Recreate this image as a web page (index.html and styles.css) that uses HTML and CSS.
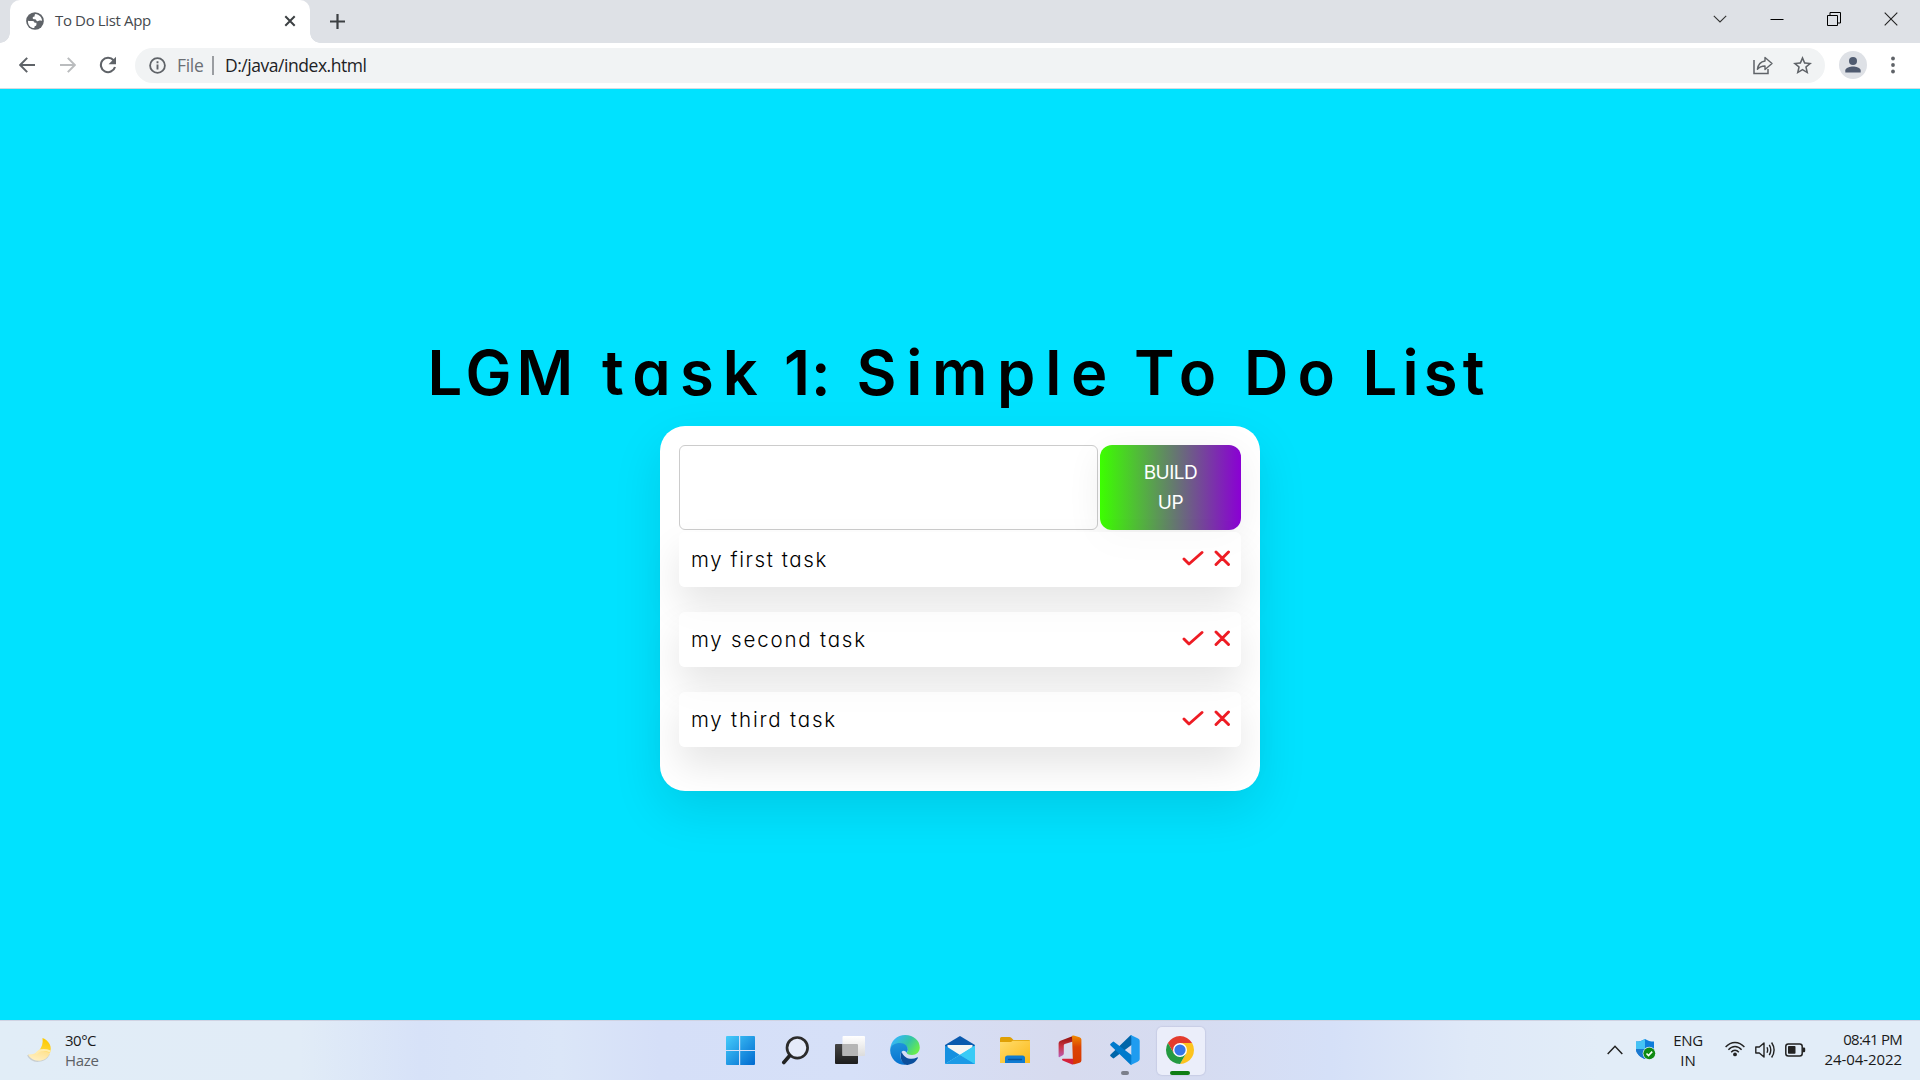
FILE: index.html
```
<!DOCTYPE html>
<html lang="en">
<head>
<meta charset="utf-8">
<title>To Do List App</title>
<link rel="stylesheet" href="styles.css">
</head>
<body>
<header class="tabstrip">
  <div class="tab">
    <svg class="favicon" width="18" height="18" viewBox="0 0 24 24"><circle cx="12" cy="12" r="11.8" fill="#5f6368"/><path d="M2.6 11.5c2.6.3 4 .4 6 .5 2 .1 2.6 1 2.7 2.4h2.6v2.3c0 1.400-1 2-2.300 2.200l-.6 2.500C6 21.400 2.300 17 2.600 11.500zM12.500 2.500c-1 1-1.500 2-.6 3.100-1.700.5-3.600 1-2.900 2.900.5 1.300 2.500.6 3.500 1.200 1.200.7.9 2.300 2.600 2.500 1.600.2 2.400-1.100 4.300-.9l2.100.5c0-4.800-4-8.900-9-9.300z" fill="#fff"/></svg>
    <span class="tab-title">To Do List App</span>
    <svg class="tab-close" width="12" height="12" viewBox="0 0 12 12"><path d="M1.300 1.300l9.400 9.400M10.700 1.300l-9.400 9.400" stroke="#3c4043" stroke-width="2"/></svg>
  </div>
  <svg class="new-tab" width="15" height="15" viewBox="0 0 15 15"><path d="M7.500 0v15M0 7.500h15" stroke="#3c4043" stroke-width="2.200"/></svg>
  <div class="window-controls">
    <svg width="14" height="14" viewBox="0 0 14 14"><path d="M.8 3.800L7 10l6.200-6.200" fill="none" stroke="#333" stroke-width="1.100"/></svg>
    <svg width="14" height="14" viewBox="0 0 14 14"><path d="M.5 7.500h13" stroke="#000"/></svg>
    <svg width="14" height="14" viewBox="0 0 14 14"><path d="M.5 3.500h10v10H.5zM3 3V.5h10.500V11H11" fill="none" stroke="#000"/></svg>
    <svg width="14" height="14" viewBox="0 0 14 14"><path d="M.7.700l12.600 12.600M13.300.7L.7 13.300" stroke="#222" stroke-width="1.100"/></svg>
  </div>
</header>
<nav class="toolbar">
  <svg class="back" width="16" height="16" viewBox="0 0 16 16"><path d="M16 8H1.500M8.200.9L1.100 8l7.100 7.100" fill="none" stroke="#5f6368" stroke-width="2"/></svg>
  <svg class="forward" width="16" height="16" viewBox="0 0 16 16"><path d="M0 8h14.500M7.800.9L14.900 8l-7.100 7.100" fill="none" stroke="#babcbe" stroke-width="2"/></svg>
  <svg class="reload" width="18" height="18" viewBox="0 0 18 18"><path d="M14.600 4.300A7.200 7.200 0 1 0 16 11" fill="none" stroke="#5f6368" stroke-width="2.100"/><path d="M17 .8v7.400H9.600z" fill="#5f6368"/></svg>
  <div class="omnibox">
    <svg width="17" height="17" viewBox="0 0 17 17"><circle cx="8.500" cy="8.500" r="7.400" fill="none" stroke="#5f6368" stroke-width="1.800"/><path d="M8.500 7.600v5M8.500 4.300v1.900" stroke="#5f6368" stroke-width="1.900"/></svg>
    <span class="scheme">File</span>
    <span class="divider"></span>
    <span class="url">D:/java/index.html</span>
    <svg class="share" width="20" height="19" viewBox="0 0 20 19"><path d="M1 4v13.500h14V13" fill="none" stroke="#5f6368" stroke-width="1.500"/><path d="M12 1.500l7 6-7 6V10c-3.400 0-5.700.9-7.600 3.300C5 9 7.400 5.700 12 5z" fill="none" stroke="#5f6368" stroke-width="1.400" stroke-linejoin="round"/></svg>
    <svg class="star" width="19" height="19" viewBox="2 2 20 20"><path fill="#5f6368" d="M22 9.240l-7.190-.62L12 2 9.190 8.630 2 9.240l5.460 4.730L5.820 21 12 17.270 18.180 21l-1.630-7.030L22 9.240zM12 15.400l-3.760 2.270 1-4.280-3.320-2.880 4.380-.38L12 6.100l1.710 4.040 4.380.38-3.320 2.880 1 4.280L12 15.400z"/></svg>
  </div>
  <svg class="avatar" width="28" height="28" viewBox="0 0 28 28"><circle cx="14" cy="14" r="14" fill="#dee1e6"/><circle cx="14" cy="10" r="4" fill="#4f5b70"/><path d="M6.300 21.500v-2c0-2.700 5-4 7.700-4s7.700 1.300 7.700 4v2z" fill="#4f5b70"/></svg>
  <svg class="menu" width="4" height="18" viewBox="0 0 4 18"><g fill="#5f6368"><circle cx="2" cy="2.500" r="1.900"/><circle cx="2" cy="9" r="1.900"/><circle cx="2" cy="15.500" r="1.900"/></g></svg>
</nav>
<main class="page">
  <h1 class="heading">
    <span class="w-lgm">LGM</span> <span class="w-task">task</span> <span class="w-num">1:</span> <span class="w-simple">Simple</span> <span class="w-to">To</span> <span class="w-do">Do</span> <span class="w-list">List</span>
  </h1>
  <section class="card">
    <form class="entry">
      <input class="entry-input" type="text">
      <button class="entry-button" type="button">BUILD<br>UP</button>
    </form>
    <ul class="tasks">
      <li class="task"><span class="task-name first">my first task</span><svg class="actions" width="48" height="17" viewBox="0 0 48 17"><path d="M2 9l5 5L20 2.500M34 2l12.500 12.500M46.500 2L34 14.500"/></svg></li>
      <li class="task"><span class="task-name">my second task</span><svg class="actions" width="48" height="17" viewBox="0 0 48 17"><path d="M2 9l5 5L20 2.500M34 2l12.500 12.500M46.500 2L34 14.500"/></svg></li>
      <li class="task"><span class="task-name">my third task</span><svg class="actions" width="48" height="17" viewBox="0 0 48 17"><path d="M2 9l5 5L20 2.500M34 2l12.500 12.500M46.500 2L34 14.500"/></svg></li>
    </ul>
  </section>
</main>
<footer class="taskbar">
  <div class="weather">
    <svg width="26" height="26" viewBox="0 0 26 26"><defs><linearGradient id="moon" x1=".7" y1="0" x2=".4" y2="1"><stop offset="0" stop-color="#fcc800"/><stop offset=".45" stop-color="#ffd52e"/><stop offset=".55" stop-color="#ffe394"/><stop offset="1" stop-color="#ffefc0"/></linearGradient></defs><path d="M1 18c4 8 16 8 21-1" fill="none" stroke="#a9a79f" stroke-opacity=".45" stroke-width="2"/><path d="M15.500 1C22 3.500 25.500 9.500 23 16c-3 7.500-11 9.500-17 6.500-2.600-1.400-4.300-3.300-5-5 8 .8 16-5.500 14.500-16.500z" fill="url(#moon)"/><path d="M9 17c3-4.500 9-4.500 14.500-2.500" fill="none" stroke="#ffecae" stroke-width="2"/></svg>
    <div class="weather-text"><div class="temp">30°C</div><div class="sky">Haze</div></div>
  </div>
  <div class="apps">
    <div class="app"><svg width="30" height="30" viewBox="0 0 30 30"><defs><linearGradient id="win" x1="0" y1="0" x2="1" y2="1" ><stop offset="0" stop-color="#45ccfb"/><stop offset="1" stop-color="#0069cf"/></linearGradient></defs><path d="M1 2q0-1 1-1h12v14H1zM15.200 1H29q1 0 1 1v13H15.200zM1 16h13v14H2q-1 0-1-1zM15.200 16H30v13q0 1-1 1H15.200z" fill="url(#win)"/></svg></div>
    <div class="app"><svg width="30" height="30" viewBox="0 0 30 30"><circle cx="17.300" cy="12.800" r="10.300" fill="#e5ebfa" stroke="#2b2b2b" stroke-width="2.700"/><path d="M9.800 20.500l-6 7" stroke="#222" stroke-width="3.600" stroke-linecap="round"/></svg></div>
    <div class="app"><svg width="30" height="30" viewBox="0 0 30 30"><defs><linearGradient id="dk" x1="0" y1="0" x2="0" y2="1"><stop offset="0" stop-color="#454545"/><stop offset="1" stop-color="#1d1d1d"/></linearGradient><linearGradient id="lt" x1="0" y1="0" x2="0" y2="1"><stop offset="0" stop-color="#fff"/><stop offset="1" stop-color="#dcdcdc"/></linearGradient></defs><rect x="0" y="9" width="23" height="20" rx="1" fill="url(#dk)"/><rect x="7.500" y="1" width="22.500" height="20" rx="1" fill="url(#lt)"/><path d="M7.500 9H22q1 0 1 1v11H7.500z" fill="#b5b5b5"/></svg></div>
    <div class="app"><svg width="30" height="30" viewBox="0 0 256 256"><defs><linearGradient id="e1" x1=".2" y1=".2" x2="1" y2=".6"><stop offset="0" stop-color="#35b8ef"/><stop offset=".5" stop-color="#34c6a4"/><stop offset="1" stop-color="#68ec4d"/></linearGradient><linearGradient id="e2" x1=".4" y1="0" x2=".5" y2="1"><stop offset="0" stop-color="#1f94dc"/><stop offset="1" stop-color="#0572d0"/></linearGradient></defs><path d="M2 122C6 50 60 0 130 0c72 0 124 48 124 106 0 38-28 64-66 64-30 0-46-10-46-18 0-7 10-9 10-27 0-24-22-42-56-42C50 83 12 98 2 122z" fill="url(#e1)"/><path d="M2 122c6-34 40-54 82-54 44 0 68 28 68 56 0 14-8 19-10 28-10-22-32-24-44-8-22 34-4 84 36 109C64 260-4 198 2 122z" fill="url(#e2)"/><path d="M100 142c-26 46 6 114 50 113 42-4 72-26 88-58 2-5-3-8-8-5-48 26-114 6-130-50z" fill="#0b4f9c"/></svg></div>
    <div class="app"><svg width="30" height="30" viewBox="0 0 30 30"><path d="M0 10L15 1l15 9v5H0z" fill="#0a5aae"/><path d="M2.500 10h25v8L15 25 2.500 18z" fill="#f6f6f4"/><path d="M0 10.500L15 20 0 29z" fill="#1590e0"/><path d="M30 10.500L0 29h30z" fill="#35c2f3"/><path d="M15 20l15 9H0z" fill="#1c9ae6"/><path d="M30 10.500V29L15 20z" fill="#3acbf6"/></svg></div>
    <div class="app"><svg width="30" height="30" viewBox="0 0 30 30"><defs><linearGradient id="fo" x1="0" y1="0" x2="1" y2="1"><stop offset="0" stop-color="#ffdc6b"/><stop offset="1" stop-color="#fcb918"/></linearGradient></defs><path d="M0 3.500q0-1.500 1.500-1.500h8q1 0 1.800.8L13.500 5H29q1 0 1 1v4H0z" fill="#dfa005"/><path d="M0 7h10q1 0 1.800-.6l.8-.6H30V28H0z" fill="url(#fo)"/><path d="M5 28v-5q0-2.500 2.500-2.500h15q2.500 0 2.500 2.500v5z" fill="#0f7bd2"/><path d="M8.500 24.500h13" stroke="#06549c" stroke-width="1.300" stroke-linecap="round"/></svg></div>
    <div class="app"><svg width="30" height="30" viewBox="0 0 30 30"><defs><linearGradient id="of" x1="0" y1="0" x2="0" y2="1"><stop offset="0" stop-color="#8c1008"/><stop offset=".5" stop-color="#cc3344"/><stop offset="1" stop-color="#b95bb6"/></linearGradient><linearGradient id="og" x1="0" y1="0" x2="0" y2="1"><stop offset="0" stop-color="#f08a00"/><stop offset=".4" stop-color="#dc4303"/><stop offset="1" stop-color="#d63802"/></linearGradient></defs><path d="M18 1L5.500 5.700Q3.600 6.500 3.600 8.300v13q0 1.200 1 .7l3.200-1.800q1-.6 1-1.700V10.200q0-1 1-1.300L18 6.500z" fill="url(#of)"/><path d="M17 .8q1.300-.5 2.600-.1l5 1.500q1.800.6 1.800 2.400v20.800q0 1.800-1.800 2.400l-5 1.500H18z" fill="url(#og)"/><path d="M7.500 23.700h10.700V29.400q-.8.200-1.600-.2l-9-3.800q-1.300-.7-.1-1.700z" fill="#d5213b"/></svg></div>
    <div class="app running"><svg width="30" height="30" viewBox="0 0 100 100"><path d="M72 1L76 30 14 77q-3 2-5 0l-7-6q-3-3 0-6L66 3q3-3 6-2z" fill="#0065a9"/><path d="M72 99l4-29L14 23q-3-2-5 0l-7 6q-3 3 0 6l64 62q3 3 6 2z" fill="#007acc"/><path d="M71 99q-3 1-6-2c2 2 6 0 6-3V6c0-3-4-5-6-3q3-3 6-2l21 10q7 3 7 8v62q0 5-7 8z" fill="#1f9cf0"/></svg></div>
    <div class="app active"><svg width="30" height="30" viewBox="-15 -15 30 30"><path d="M-12.120-7A14 14 0 0 1 12.120-7H0L-6.060 3.500z" fill="#e33b2e"/><path d="M12.120-7A14 14 0 0 1 0 14L6.060 3.500 0-7z" fill="#fcc31e"/><path d="M0 14A14 14 0 0 1-12.120-7L-6.060 3.500 6.060 3.500z" fill="#249a41"/><circle r="7" fill="#fff"/><circle r="5.600" fill="#3577e8"/></svg></div>
  </div>
  <div class="tray">
    <svg class="tray-chevron" width="16" height="10" viewBox="0 0 16 10"><path d="M.7 9L8 1.300 15.300 9" fill="none" stroke="#222" stroke-width="1.500"/></svg>
    <svg class="shield" width="21" height="21" viewBox="0 0 21 21"><path d="M10 0c2.500 1.700 5.500 2.600 9 2.600V10c0 4.500-4 8-9 10-5-2-9-5.500-9-10V2.600C4.500 2.600 7.500 1.700 10 0z" fill="#0f7ddb"/><path d="M10 0v10H1V2.600C4.500 2.600 7.500 1.700 10 0z" fill="#45c3f5"/><path d="M10 10v10c-5-2-9-5.500-9-10z" fill="#1a78cf"/><circle cx="14.300" cy="14.300" r="6.600" fill="#dfeaf6"/><circle cx="14.300" cy="14.300" r="5.900" fill="#0f8a12"/><path d="M11.500 14.500l2 2 3.700-3.900" fill="none" stroke="#fff" stroke-width="1.600"/></svg>
    <div class="lang"><div class="eng">ENG</div><div>IN</div></div>
    <svg class="wifi" width="20" height="16" viewBox="0 0 20 16"><g fill="none" stroke="#222" stroke-width="1.400"><path d="M.6 6Q4.800 1.500 10 1.500T19.400 6"/><path d="M3.400 8.800Q6.300 5.500 10 5.500t6.600 3.300"/><path d="M6.200 11.300Q7.800 9.300 10 9.300t3.800 2"/></g><circle cx="10" cy="13.400" r="1.900" fill="#222"/></svg>
    <svg class="volume" width="20" height="18" viewBox="0 0 20 18"><g fill="none" stroke="#222" stroke-width="1.400"><path d="M.8 6v6h3.500L9 16V2L4.300 6z" stroke-linejoin="round"/><path d="M12 6.300q1.300 2.700 0 5.400M14.300 3.900q3 5.100 0 10.200M16.600 1.500q5 7.500 0 15"/></g></svg>
    <svg class="battery" width="21" height="14" viewBox="0 0 21 14"><rect x=".8" y=".9" width="16.400" height="12" rx="2.500" fill="none" stroke="#222" stroke-width="1.500"/><rect x="3" y="3.100" width="7.500" height="7.600" rx=".8" fill="#222"/><path d="M17.800 4.500h1.200q1.200 0 1.200 1.200v2.400q0 1.200-1.200 1.200h-1.200z" fill="#222"/></svg>
    <div class="clock"><div class="time">08:41 PM</div><div class="date">24-04-2022</div></div>
  </div>
</footer>
</body>
</html>
```
FILE: styles.css
```
* { box-sizing: border-box; }
body {
  margin: 0;
  height: 1080px;
  display: flex;
  flex-direction: column;
  overflow: hidden;
  background: #00e2ff;
  font: 15px/20px "Open Sans", "Noto Sans", sans-serif;
}
svg { display: block; flex: none; }

/* Tab strip */
.tabstrip {
  height: 43px;
  flex: none;
  display: flex;
  align-items: center;
  padding-left: 10px;
  background: #dee1e6;
}
.tab {
  position: relative;
  width: 300px;
  height: 43px;
  display: flex;
  align-items: center;
  padding: 0 14px 1px 16px;
  border-radius: 10px 10px 0 0;
  background: #fff;
}
.tab::before, .tab::after {
  content: "";
  position: absolute;
  bottom: 0;
  width: 10px;
  height: 10px;
}
.tab::before { left: -10px; background: radial-gradient(circle at 0 0, transparent 9.5px, #fff 10px); }
.tab::after { right: -10px; background: radial-gradient(circle at 100% 0, transparent 9.5px, #fff 10px); }
.tab-title {
  flex: 1;
  padding: 0 0 2px 11px;
  color: #45494d;
  letter-spacing: -0.36px;
}
.new-tab { margin-left: 20px; }
.window-controls {
  display: flex;
  gap: 43px;
  margin: 0 22px 6px auto;
}

/* Toolbar */
.toolbar {
  height: 46px;
  flex: none;
  display: flex;
  align-items: center;
  padding: 0 25px 1px 19px;
  border-bottom: 1px solid #d5dbdf;
  background: #fff;
}
.forward { margin-left: 25px; }
.reload { margin-left: 23px; }
.omnibox {
  height: 35px;
  flex: 1;
  display: flex;
  align-items: center;
  margin-left: 18px;
  padding: 0 13px 0 14px;
  border-radius: 18px;
  background: #f1f3f4;
  font-size: 17.500px;
  line-height: 35px;
  letter-spacing: -0.46px;
}
.scheme { margin-left: 11px; width: 35px; color: #6b6f74; letter-spacing: -0.29px; }
.divider { width: 2px; height: 19px; background: #9a9da1; }
.url { flex: 1; margin-left: 11px; color: #202124; }
.star { margin-left: 20px; }
.avatar { margin-left: 14px; }
.menu { margin-left: 24px; }

/* Page */
.page {
  flex: 1;
  display: flex;
  flex-direction: column;
  align-items: center;
  padding-top: 244px;
}
.heading {
  display: flex;
  align-self: flex-start;
  margin: 0 0 13px;
  padding-left: 427.500px;
  color: #000;
  font: 600 61.500px/80px Inter, sans-serif;
  font-feature-settings: "cv11";
  white-space: nowrap;
}
.w-lgm { width: 174.500px; letter-spacing: 5px; }
.w-task { width: 182px; letter-spacing: 9.200px; }
.w-num { width: 72.500px; letter-spacing: 1px; }
.w-simple { width: 277.500px; letter-spacing: 9.700px; }
.w-to { width: 110px; letter-spacing: 9px; }
.w-do { width: 118.500px; letter-spacing: 9px; }
.w-list { letter-spacing: 5.200px; }
.card {
  width: 600px;
  height: 365px;
  padding: 19px;
  border-radius: 25px;
  background: #fff;
  box-shadow: 0 19px 50px rgba(0, 0, 0, .1);
}
.entry {
  display: flex;
  gap: 2px;
  height: 85px;
}
.entry-input {
  width: 419px;
  border: 1px solid #ccc;
  border-radius: 6px;
  background: #fff;
}
.entry-button {
  flex: 1;
  padding: 0;
  border: 0;
  border-radius: 12px;
  background: linear-gradient(90deg, #3cff00, #8a00d4);
  box-shadow: 0 8px 36px rgba(0, 0, 0, .07);
  color: #fff;
  font: 400 19px/30px Inter, sans-serif;
  letter-spacing: -0.5px;
}
.tasks {
  display: flex;
  flex-direction: column;
  gap: 25px;
  margin: 2px 0 0;
  padding: 0;
  list-style: none;
}
.task {
  height: 55px;
  display: flex;
  align-items: center;
  justify-content: space-between;
  padding: 0 11px 0 12px;
  border-radius: 6px;
  background: rgba(255, 255, 255, .65);
  box-shadow: 0 19px 37px rgba(0, 0, 0, .1);
}
.task-name {
  color: #000;
  font: 350 20.500px/30px Inter, sans-serif;
  font-feature-settings: "cv11";
  letter-spacing: 1.800px;
}
.task-name.first { letter-spacing: 1.600px; }
.actions {
  margin-bottom: 2px;
  fill: none;
  stroke: #ee1c24;
  stroke-width: 2.900;
  stroke-linecap: round;
  stroke-linejoin: round;
}

/* Taskbar */
.taskbar {
  height: 60px;
  flex: none;
  display: grid;
  grid-template-columns: 712.500px 495px 1fr;
  align-items: center;
  border-top: 1px solid #cfd3e3;
  background: linear-gradient(90deg, #e1edf7 0, #e1ecf7 300px, #d7e2f8 420px, #dbe6f8 560px, #d5dff8 660px, #d6e0f8 850px, #d7dbef 1060px, #d6dcf1 1200px, #d5e0f8 1330px, #dfe9f8 1470px, #e2edf8 1600px, #e2edf8 100%);
}
.weather { display: flex; align-items: center; gap: 12px; padding: 0 0 1px 27px; }
.temp { color: #1a1a1a; letter-spacing: -0.5px; }
.sky { color: #5c6166; letter-spacing: -0.31px; }
.apps { display: flex; }
.app {
  position: relative;
  width: 55px;
  height: 58px;
  display: flex;
  align-items: center;
  justify-content: center;
  padding-bottom: 2px;
}
.app svg { position: relative; }
.app.running::after, .app.active::after {
  content: "";
  position: absolute;
  left: 50%;
  bottom: 5px;
  width: 8px;
  height: 4px;
  margin-left: -4px;
  border-radius: 2px;
  background: #7b7f8b;
}
.app.active::before {
  content: "";
  position: absolute;
  inset: 5px 3px 5px 4px;
  border-radius: 5px;
  background: #ebeefa;
  box-shadow: 0 0 1px 1px rgba(150, 155, 190, .2);
}
.app.active::after { width: 20px; margin-left: -10px; background: #0f7d12; }
.tray {
  display: flex;
  align-items: center;
  justify-content: flex-end;
  padding: 0 18px 2px 0;
  color: #1a1a1a;
}
.tray-chevron { margin-top: 1px; }
.shield { margin-left: 12px; }
.lang { width: 40px; margin-left: 12px; text-align: center; }
.eng { letter-spacing: -0.31px; }
.wifi { margin: 0 0 2px 17px; }
.volume { margin: 0 0 0 10px; }
.battery { margin: 1px 0 0 10px; }
.clock { width: 79px; margin: 0 0 2px 17px; text-align: right; }
.time { letter-spacing: -0.74px; }
.date { letter-spacing: -0.08px; }
```
